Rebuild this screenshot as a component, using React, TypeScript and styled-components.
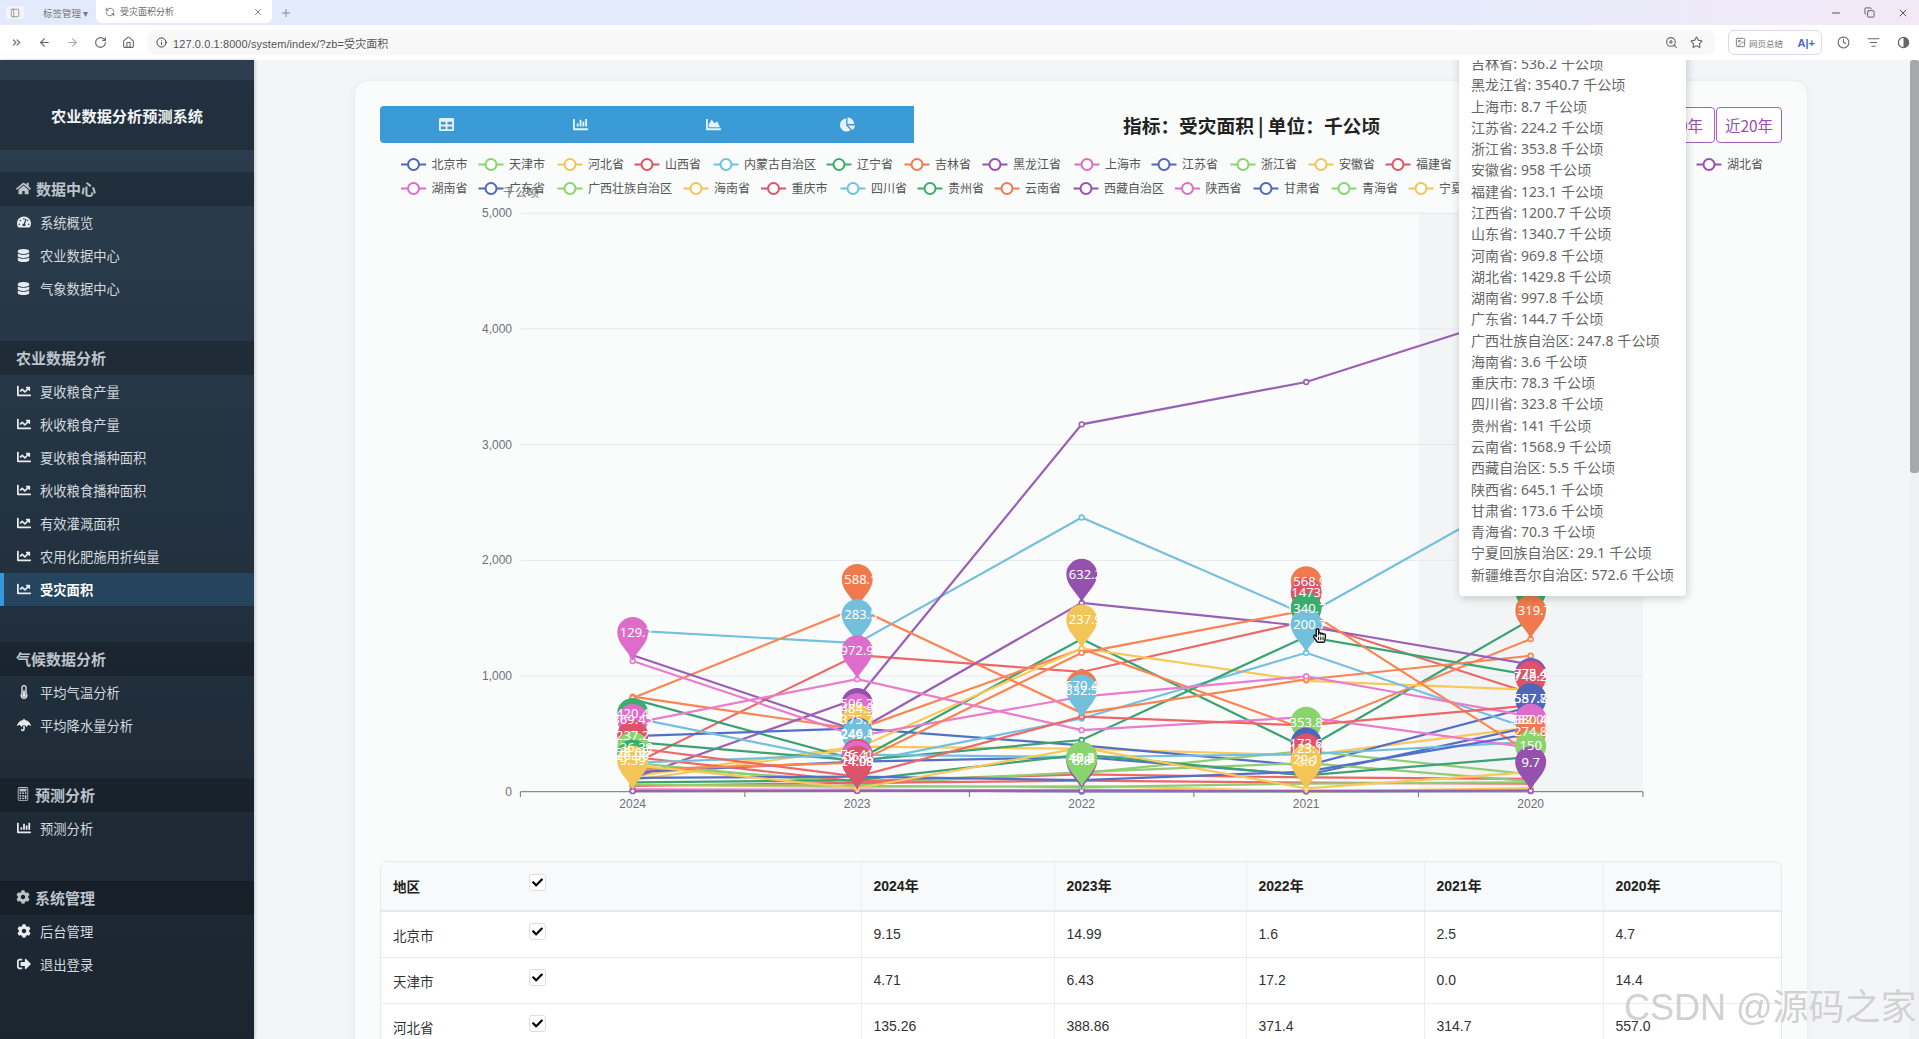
import React from 'react';
import styled, { createGlobalStyle } from 'styled-components';
import {
  FaHome, FaTachometerAlt, FaDatabase, FaChartLine, FaThermometerHalf, FaUmbrella,
  FaChartBar, FaCog, FaSignOutAlt, FaTable, FaChartArea, FaChartPie, FaCheck,
  FaHandPointer, FaRegHandPointer,
} from 'react-icons/fa';
import { BsCalculator } from 'react-icons/bs';
import {
  PanelLeft, ChevronsRight, ArrowLeft, ArrowRight, RotateCw, Home, Info, ZoomIn, Star,
  Clock, ListFilter, Minus, Copy, X, Plus, RefreshCcw, Image as ImageIcon,
} from 'lucide-react';

const CJK = `"Noto Sans CJK SC", sans-serif`;
const ARIAL = `"Liberation Sans", "Noto Sans CJK SC", sans-serif`;
const NOTO = `"Noto Sans", "Noto Sans CJK SC", sans-serif`;

const Global = createGlobalStyle`
  html, body { margin: 0; padding: 0; height: 100%; overflow: hidden; }
  body { font-family: ${ARIAL}; background: #f3f5f9; }
  * { box-sizing: border-box; }
`;

const Page = styled.div`
  width: 1919px; height: 1039px; display: flex; flex-direction: column; overflow: hidden; position: relative;
`;

/* ---------- browser chrome ---------- */
const TabBar = styled.div`
  height: 25px; flex: none; display: flex; align-items: center; padding-left: 6px; color: #666;
  background: linear-gradient(90deg, #e2eafc 0%, #e5ebfb 75%, #f4e9f6 100%);
`;
const PanelBtn = styled.div`
  width: 18px; height: 13px; border-radius: 3px; background: #f3f5fb; display: flex; align-items: center; justify-content: center; color: #888;
`;
const TabGroup = styled.div`
  margin-left: 19px; width: 53px; font: 9.5px ${CJK}; color: #777; white-space: nowrap;
`;
const ActiveTab = styled.div`
  width: 176px; height: 23px; margin-top: -2px; background: #fff; border-radius: 0 0 6px 6px; display: flex; align-items: center; padding: 0 9px 0 9px; gap: 5px;
  font: 9px ${CJK}; color: #666;
`;
const TabTitle = styled.span` flex: 1; `;
const NewTab = styled.div` margin-left: 8px; display: flex; color: #888; `;
const WindowBtns = styled.div`
  margin-left: auto; display: flex; gap: 22px; padding-right: 10px; color: #555;
`;
const AddressBar = styled.div`
  height: 35px; flex: none; background: #fff; display: flex; align-items: center; padding: 0 0 0 10px; color: #666;
`;
const NavIcons = styled.div` display: flex; gap: 15px; align-items: center; width: 137px; flex: none; `;
const UrlPill = styled.div`
  width: 1568px; height: 25px; border-radius: 8px; background: #f8f8f9; display: flex; align-items: center; padding: 0 12px 0 9px; gap: 6px;
`;
const UrlText = styled.span` flex: 1; font: 11px ${ARIAL}; color: #555; letter-spacing: 0.1px; `;
const PillIcons = styled.div` display: flex; gap: 12px; color: #666; `;
const SummaryPill = styled.div`
  margin-left: 13px; width: 94px; height: 25px; border: 1px solid #dcd6f2; border-radius: 6px; display: flex; align-items: center; padding: 0 6px; gap: 3px;
  font: 8.5px ${CJK}; color: #777;
`;
const AiMark = styled.span` margin-left: auto; font: 700 11px ${ARIAL}; color: #4a63d8; `;
const ToolIcons = styled.div` margin-left: 15px; display: flex; gap: 17px; align-items: center; color: #666; `;

/* ---------- layout ---------- */
const Body = styled.div` flex: 1; min-height: 0; display: flex; position: relative; `;
const Sidebar = styled.aside`
  width: 254px; flex: none; padding-top: 20px; display: flex; flex-direction: column;
  background: linear-gradient(180deg, #2c3e50 0%, #1a252f 100%);
  box-shadow: 1px 0 3px rgba(0,0,0,.2); z-index: 1; font-family: ${CJK};
`;
const Brand = styled.div`
  height: 71px; flex: none; display: flex; align-items: center; justify-content: center; margin-bottom: 21px;
  background: rgba(0,0,0,.2); border-bottom: 1px solid rgba(255,255,255,.08);
  color: #f2f4f6; font-size: 15.2px; font-weight: 700;
`;
const Group = styled.section` margin-bottom: 36px; `;
const GroupHead = styled.div`
  height: 34px; padding: 0 0 2px 16px; display: flex; align-items: center; gap: 5px;
  background: rgba(0,0,0,.2); color: #bcc3ca; font-size: 15px; font-weight: 700;
`;
const Item = styled.div<{ $active?: boolean }>`
  height: 33px; display: flex; align-items: center; gap: 9px; padding: 0 0 1px ${p => (p.$active ? 12 : 16)}px;
  border-left: ${p => (p.$active ? '4px solid #3498db' : 'none')};
  background: ${p => (p.$active ? 'rgba(52,152,219,.2)' : 'transparent')};
  color: ${p => (p.$active ? '#ffffff' : '#d3d9de')};
  font-size: 13.3px; font-weight: ${p => (p.$active ? 700 : 400)};
`;
const ItemIcon = styled.span` width: 15px; display: flex; justify-content: center; color: #e8ecef; `;
const Main = styled.main`
  flex: 1; min-width: 0; position: relative; overflow: hidden; padding: 20px 102px 0 100px;
`;
const Card = styled.div`
  height: 1200px; background: #fafbfb; border: 1px solid #eceef1; border-radius: 14px; padding: 25px 25px 0 25px;
  box-shadow: 0 2px 10px rgba(0,0,0,.04);
`;
const TopRow = styled.div` display: flex; align-items: center; height: 37px; `;
const ViewBar = styled.div`
  width: 534px; height: 37px; display: flex; background: #3a9bd6; border-radius: 4px 0 0 4px; flex: none;
`;
const ViewBtn = styled.div`
  flex: 1; display: flex; align-items: center; justify-content: center; color: #e6f3fb;
`;
const Title = styled.h2`
  flex: 1; margin: 0; padding-left: 5px; text-align: center; font: 700 18.7px ${CJK}; color: #222;
`;
const Ranges = styled.div` display: flex; gap: 1px; flex: none; `;
const RangeBtn = styled.div<{ $w: number }>`
  width: ${p => p.$w}px; height: 36px; display: flex; align-items: center; justify-content: center;
  border: 1.5px solid #a85fc0; border-radius: 4px; background: #fff; color: #9a50b0; font: 15.5px ${CJK};
`;
const ChartSvg = styled.svg`
  display: block; margin-top: 6px; width: 1402px; height: 712px; overflow: visible;
  text { font-family: ${ARIAL}; }
`;
const Tooltip = styled.div`
  position: absolute; left: 1205px; bottom: 443px; width: 227px; padding: 10px 0 11px 12px;
  background: #fff; border-radius: 4px; box-shadow: 1px 2px 10px rgba(0,0,0,.2);
  font: 14px/21.28px ${NOTO}; letter-spacing: 0.1px; color: #666; white-space: nowrap;
`;
const TableWrap = styled.div`
  border: 1px solid #e6e8ea; border-radius: 8px; overflow: hidden; background: #fff; width: 1402px;
`;
const Table = styled.table`
  width: 100%; border-collapse: collapse; table-layout: fixed; font: 14px ${ARIAL}; color: #333;
`;
const Th = styled.th<{ $sep?: boolean }>`
  height: 49px; text-align: left; padding: 0 12px 2px; background: #f8f9fa; color: #222; font-weight: 700;
  border-bottom: 2px solid #e6e8ea; border-left: ${p => (p.$sep ? '1px solid #eceeef' : 'none')};
`;
const Td = styled.td<{ $sep?: boolean }>`
  height: 46px; padding: 0 12px; border-bottom: 1px solid #e8eaec; border-left: ${p => (p.$sep ? '1px solid #eceeef' : 'none')};
`;
const Check = styled.span`
  display: flex; width: 17px; height: 17px; margin-top: -6px; align-items: center; justify-content: center;
  background: #fff; border: 1px solid #ddd; border-radius: 3px; color: #000; font-size: 11px;
`;
const Region = styled.span` position: relative; top: 1px; font-family: ${CJK}; font-size: 13.5px; `;
const Scrollbar = styled.div`
  width: 9px; flex: none; background: #eff0f3;
`;
const Thumb = styled.div` height: 413px; background: #a8a8a8; border-radius: 3px; `;
const Watermark = styled.div`
  position: absolute; left: 1624px; top: 978px; font: 36px ${ARIAL}; color: rgba(170,170,170,.55); white-space: nowrap;
  text-shadow: 0 0 1px #fff; pointer-events: none; z-index: 3;
`;

/* ---------- data ---------- */
const COLORS = ['#5470c6', '#91cc75', '#fac858', '#ee6666', '#73c0de', '#3ba272', '#fc8452', '#9a60b4', '#ea7ccc'];
const MARK = ['#4f66bb', '#8ad46e', '#f3c557', '#dc5468', '#73c0dc', '#3bac6c', '#f07a4e', '#9452ae', '#dd6ccb'];

type S = [string, number[]];
const SERIES: S[] = [
  ['北京市', [9.15, 14.99, 1.6, 2.5, 4.7]],
  ['天津市', [4.71, 6.43, 17.2, 0.0, 14.4]],
  ['河北省', [135.26, 388.86, 371.4, 314.7, 557.0]],
  ['山西省', [237.2, 1181, 1035, 1473, 850]],
  ['内蒙古自治区', [1392, 1283.5, 2370, 1527, 2616]],
  ['辽宁省', [800, 274, 1320, 374, 1487]],
  ['吉林省', [821, 539, 1233, 536.2, 1319.7]],
  ['黑龙江省', [118, 805, 3175, 3540.7, 4160]],
  ['上海市', [20, 15, 9, 8.7, 8]],
  ['江苏省', [480, 548, 400, 224.2, 736]],
  ['浙江省', [220, 90, 160, 353.8, 150]],
  ['安徽省', [100, 375.7, 1237.9, 958, 880]],
  ['福建省', [300, 90, 150, 123.1, 110]],
  ['江西省', [640, 249, 632.5, 1200.7, 540]],
  ['山东省', [430, 270, 447, 1340.7, 1008]],
  ['河南省', [810, 1588.1, 680, 969.8, 1175]],
  ['湖北省', [1180, 527, 1632.2, 1429.8, 1100]],
  ['湖南省', [1129.7, 480, 821, 997.8, 650]],
  ['广东省', [170, 260, 300, 144.7, 560]],
  ['广西壮族自治区', [250, 60, 170, 247.8, 90]],
  ['海南省', [60, 40, 50, 3.6, 30]],
  ['重庆市', [50, 76.41, 95, 78.3, 70]],
  ['四川省', [250, 320, 300, 323.8, 430]],
  ['贵州省', [80, 100, 320, 141, 300]],
  ['云南省', [190, 250, 1200, 1568.9, 330]],
  ['西藏自治区', [5, 7, 8, 5.5, 9.7]],
  ['陕西省', [591, 972.9, 532, 645.1, 380]],
  ['甘肃省', [120, 130, 100, 173.6, 500]],
  ['青海省', [60, 50, 40, 70.3, 80]],
  ['宁夏回族自治区', [230, 30, 380, 29.1, 170]],
  ['新疆维吾尔自治区', [380, 130, 648, 572.6, 746]],
];
const LEGEND_X = [413.5, 491, 570, 647, 726, 839, 917, 995, 1087, 1164, 1243, 1321, 1398, 1476, 1553, 1631, 1709,
  413.5, 491, 570, 696, 773.5, 853, 930, 1007, 1086, 1187.5, 1266, 1344, 1421, 1530];
const YEARS = ['2024', '2023', '2022', '2021', '2020'];
const XS = [632.7, 857.2, 1081.7, 1306.2, 1530.7];
const yOf = (v: number) => 791.7 - v * 0.1157;

/* year index, position value, label, colour index */
const PINS: [number, number, string, number][] = [
  [0, 1129.7, '1129.7', 8], [0, 430, '420.4', 5], [0, 378, '369.45', 8], [0, 237.2, '237.2', 3],
  [0, 140, '136.39', 1], [0, 90, '28.08', 1], [0, 70, '26.06', 5], [0, 20, '9.59', 2],
  [1, 1588.1, '1588.1', 6], [1, 1283.5, '1283.5', 4], [1, 972.9, '972.9', 8],
  [1, 516, '506.3', 7], [1, 470, '484.9', 8], [1, 375.7, '375.7', 2], [1, 260, '246.1', 0], [1, 249.4, '249.4', 4],
  [1, 76.41, '76.41', 3], [1, 60, '56.1', 8], [1, 14.99, '14.99', 0], [1, 17, '24.08', 3],
  [2, 1632.2, '1632.2', 7], [2, 1237.9, '1237.9', 2], [2, 670.4, '670.4', 6], [2, 632.5, '632.5', 4],
  [2, 20, '8.8', 7], [2, 48.3, '48.3', 5], [2, 50, '40.4', 1], [2, 40, '17.2', 1],
  [3, 1568.9, '1568.9', 6], [3, 1473, '1473', 3], [3, 1340.7, '1340.7', 5], [3, 1200.7, '1200.7', 4],
  [3, 353.8, '353.8', 1], [3, 173.6, '173.6', 0], [3, 123.1, '123.1', 3], [3, 29.1, '29.1', 2], [3, 15, '3.6', 2],
  [4, 1487, '1487', 5], [4, 1319.7, '1319.7', 6], [4, 775, '775.4', 0], [4, 772, '772.4', 7], [4, 746.2, '746.2', 3],
  [4, 557.8, '557.8', 0], [4, 556, '587.7', 0], [4, 380.4, '380.4', 8], [4, 378, '382.04', 8],
  [4, 274.8, '274.8', 6], [4, 150, '150', 1], [4, 9.7, '9.7', 7],
];

const PIN = 'M0 0C-2.5 -8 -15.5 -17 -15.5 -28.5A15.5 15.5 0 1 1 15.5 -28.5C15.5 -17 2.5 -8 0 0Z';

const Chart: React.FC = () => (
  <ChartSvg viewBox="380 149 1402 712">
    <rect x={1419} y={213} width={224} height={579} fill="rgba(150,155,175,.07)" />
    {[1, 2, 3, 4, 5].map(k => (
      <line key={k} x1={520.4} x2={1643} y1={yOf(k * 1000)} y2={yOf(k * 1000)} stroke="#e4e8f1" />
    ))}
    {[0, 1, 2, 3, 4, 5].map(k => (
      <text key={k} x={512} y={yOf(k * 1000) + 4} textAnchor="end" fontSize={12} fill="#6e7079">
        {k === 0 ? '0' : `${k},000`}
      </text>
    ))}
    <line x1={520.4} x2={1643} y1={791.7} y2={791.7} stroke="#6e7079" />
    {[0, 1, 2, 3, 4, 5].map(k => (
      <line key={k} x1={520.4 + k * 224.5} x2={520.4 + k * 224.5} y1={792} y2={797} stroke="#6e7079" />
    ))}
    {YEARS.map((y, i) => (
      <text key={y} x={XS[i]} y={808} textAnchor="middle" fontSize={12} fill="#6e7079">{y}</text>
    ))}

    {SERIES.map(([name, vals], i) => {
      const c = COLORS[i % 9];
      return (
        <g key={name}>
          <polyline fill="none" stroke={c} strokeWidth={2.2} points={vals.map((v, j) => `${XS[j]},${yOf(v)}`).join(' ')} />
          {vals.map((v, j) => (
            <circle key={j} cx={XS[j]} cy={yOf(v)} r={2.4} fill="#fff" stroke={c} strokeWidth={1.6} />
          ))}
        </g>
      );
    })}

    {PINS.map(([yi, v, , ci], i) => (
      <path key={i} d={PIN} transform={`translate(${XS[yi]} ${yOf(v)})`} fill={MARK[ci]} />
    ))}
    {PINS.map(([yi, v, label], i) => (
      <text key={i} x={XS[yi]} y={yOf(v) - 24} textAnchor="middle" fontSize={13} fill="#fff" style={{ fontFamily: NOTO }}>{label}</text>
    ))}

    {SERIES.map(([name], i) => {
      const cx = LEGEND_X[i];
      const cy = i < 17 ? 164.5 : 188.5;
      const c = MARK[i % 9];
      return (
        <g key={name}>
          <line x1={cx - 12.5} x2={cx + 12.5} y1={cy} y2={cy} stroke={c} strokeWidth={2} />
          <circle cx={cx} cy={cy} r={5.5} fill="#fcfdfd" stroke={c} strokeWidth={2} />
          <text x={cx + 18} y={cy + 4} fontSize={12} fill="#555" style={{ fontFamily: CJK }}>{name}</text>
        </g>
      );
    })}
    <text x={521} y={197} textAnchor="middle" fontSize={12} fill="#6e7079" style={{ fontFamily: CJK }}>千公顷</text>

    <FaHandPointer x={1312} y={628} size={15} color="#fff" />
    <FaRegHandPointer x={1312} y={628} size={15} color="#111" />
  </ChartSvg>
);

const ROWS: [string, string[]][] = [
  ['北京市', ['9.15', '14.99', '1.6', '2.5', '4.7']],
  ['天津市', ['4.71', '6.43', '17.2', '0.0', '14.4']],
  ['河北省', ['135.26', '388.86', '371.4', '314.7', '557.0']],
];

const NavItem: React.FC<{ icon: React.ReactNode; label: string; active?: boolean }> = ({ icon, label, active }) => (
  <Item $active={active}><ItemIcon>{icon}</ItemIcon>{label}</Item>
);

const App: React.FC = () => (
  <Page>
    <Global />
    <TabBar>
      <PanelBtn><PanelLeft size={10} /></PanelBtn>
      <TabGroup>标签管理 ▾</TabGroup>
      <ActiveTab>
        <RefreshCcw size={10} />
        <TabTitle>受灾面积分析</TabTitle>
        <X size={10} />
      </ActiveTab>
      <NewTab><Plus size={12} /></NewTab>
      <WindowBtns><Minus size={12} /><Copy size={11} /><X size={12} /></WindowBtns>
    </TabBar>
    <AddressBar>
      <NavIcons>
        <ChevronsRight size={13} />
        <ArrowLeft size={13} />
        <ArrowRight size={13} color="#aaa" />
        <RotateCw size={13} />
        <Home size={13} />
      </NavIcons>
      <UrlPill>
        <Info size={11} color="#333" />
        <UrlText>127.0.0.1:8000/system/index/?zb=受灾面积</UrlText>
        <PillIcons><ZoomIn size={13} /><Star size={13} /></PillIcons>
      </UrlPill>
      <SummaryPill><ImageIcon size={11} />网页总结<AiMark>A|+</AiMark></SummaryPill>
      <ToolIcons>
        <Clock size={13} />
        <ListFilter size={13} />
        <svg width="13" height="13" viewBox="0 0 14 14"><circle cx="7" cy="7" r="5.5" fill="none" stroke="#666" strokeWidth="1.4" /><path d="M7 1.5a5.5 5.5 0 0 1 0 11z" fill="#666" /></svg>
      </ToolIcons>
    </AddressBar>
    <Body>
      <Sidebar>
        <Brand>农业数据分析预测系统</Brand>
        <Group>
          <GroupHead><FaHome size={15} />数据中心</GroupHead>
          <NavItem icon={<FaTachometerAlt size={14} />} label="系统概览" />
          <NavItem icon={<FaDatabase size={13} />} label="农业数据中心" />
          <NavItem icon={<FaDatabase size={13} />} label="气象数据中心" />
        </Group>
        <Group>
          <GroupHead>农业数据分析</GroupHead>
          {['夏收粮食产量', '秋收粮食产量', '夏收粮食播种面积', '秋收粮食播种面积', '有效灌溉面积', '农用化肥施用折纯量'].map(t => (
            <NavItem key={t} icon={<FaChartLine size={14} />} label={t} />
          ))}
          <NavItem icon={<FaChartLine size={14} />} label="受灾面积" active />
        </Group>
        <Group>
          <GroupHead>气候数据分析</GroupHead>
          <NavItem icon={<FaThermometerHalf size={14} />} label="平均气温分析" />
          <NavItem icon={<FaUmbrella size={14} />} label="平均降水量分析" />
        </Group>
        <Group>
          <GroupHead><BsCalculator size={14} />预测分析</GroupHead>
          <NavItem icon={<FaChartBar size={14} />} label="预测分析" />
        </Group>
        <Group>
          <GroupHead><FaCog size={14} />系统管理</GroupHead>
          <NavItem icon={<FaCog size={14} />} label="后台管理" />
          <NavItem icon={<FaSignOutAlt size={14} />} label="退出登录" />
        </Group>
      </Sidebar>
      <Main>
        <Card>
          <TopRow>
            <ViewBar>
              <ViewBtn><FaTable size={15} /></ViewBtn>
              <ViewBtn><FaChartBar size={15} /></ViewBtn>
              <ViewBtn><FaChartArea size={15} /></ViewBtn>
              <ViewBtn><FaChartPie size={15} /></ViewBtn>
            </ViewBar>
            <Title>指标：受灾面积 | 单位：千公顷</Title>
            <Ranges>
              <RangeBtn $w={58}>近5年</RangeBtn>
              <RangeBtn $w={72}>近10年</RangeBtn>
              <RangeBtn $w={66}>近20年</RangeBtn>
            </Ranges>
          </TopRow>
          <Chart />
          <TableWrap>
            <Table>
              <colgroup>
                <col style={{ width: 136 }} />
                <col style={{ width: 344 }} />
                <col style={{ width: 193 }} />
                <col style={{ width: 192 }} />
                <col style={{ width: 178 }} />
                <col style={{ width: 179 }} />
                <col />
              </colgroup>
              <thead>
                <tr>
                  <Th><Region>地区</Region></Th>
                  <Th><Check><FaCheck /></Check></Th>
                  {YEARS.map(y => <Th key={y} $sep>{y}年</Th>)}
                </tr>
              </thead>
              <tbody>
                {ROWS.map(([name, vals]) => (
                  <tr key={name}>
                    <Td><Region>{name}</Region></Td>
                    <Td><Check><FaCheck /></Check></Td>
                    {vals.map((v, i) => <Td key={i} $sep>{v}</Td>)}
                  </tr>
                ))}
              </tbody>
            </Table>
          </TableWrap>
        </Card>
        <Tooltip>
          {SERIES.slice(6).map(([name, vals]) => (
            <div key={name}>{name}: {vals[3]} 千公顷</div>
          ))}
        </Tooltip>
      </Main>
      <Scrollbar><Thumb /></Scrollbar>
    </Body>
    <Watermark>CSDN @源码之家</Watermark>
  </Page>
);

export default App;
